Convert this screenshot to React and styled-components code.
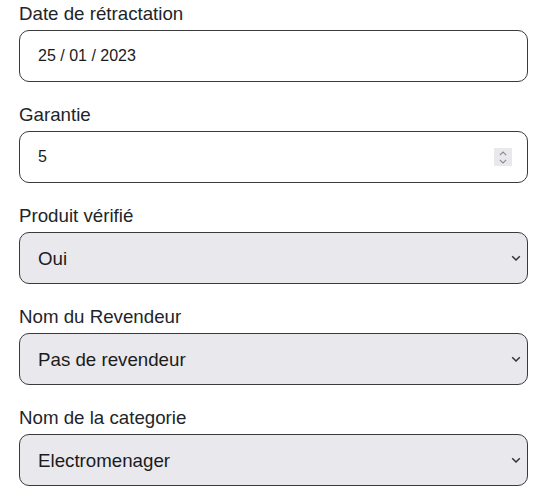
import React from "react";
import styled, { createGlobalStyle } from "styled-components";

const Global = createGlobalStyle`
  html, body { margin: 0; padding: 0; background: #ffffff; }
  body { font-family: "Liberation Sans", Arial, sans-serif; color: #212529; }
  * { box-sizing: border-box; }
`;

const Form = styled.form`
  display: flex;
  flex-direction: column;
  gap: 19px;
  width: 509px;
  margin-left: 19px;
`;

const Field = styled.div`
  display: flex;
  flex-direction: column;
`;

const Label = styled.label`
  font-size: 18.72px;
  line-height: 28px;
  margin-bottom: 2px;
  color: #212529;
`;

const Box = styled.div`
  position: relative;
  display: flex;
  align-items: center;
  height: 52px;
  border: 1px solid #3a3a3a;
  border-radius: 10px;
  background: ${(p) => (p.$grey ? "#e9e8ed" : "#ffffff")};
  overflow: hidden;
`;

const TextInput = styled.input`
  flex: 1;
  min-width: 0;
  height: 100%;
  border: none;
  outline: none;
  background: transparent;
  padding: 0 0 0 18px;
  font-family: inherit;
  font-size: 16px;
  color: #1b1b1b;
`;

const Spinner = styled.span`
  display: flex;
  flex-direction: column;
  align-items: center;
  justify-content: center;
  gap: 3px;
  width: 18px;
  height: 18px;
  margin-right: 15px;
  background: #e9e9ed;
`;

const Select = styled.select`
  appearance: none;
  -webkit-appearance: none;
  width: 100%;
  height: 100%;
  border: none;
  outline: none;
  background: transparent;
  padding: 0 40px 0 18px;
  font-family: inherit;
  font-size: 18.72px;
  color: #1b1b1b;
`;

const Chevron = styled.svg`
  position: absolute;
  right: 6px;
  top: 50%;
  margin-top: -4px;
  pointer-events: none;
`;

function SelectField({ label, value, options }) {
  return (
    <Field>
      <Label>{label}</Label>
      <Box $grey>
        <Select defaultValue={value}>
          {options.map((o) => (
            <option key={o}>{o}</option>
          ))}
        </Select>
        <Chevron width="10" height="8" viewBox="0 0 10 8">
          <path d="M1.2 2.2 L5 6 L8.8 2.2" fill="none" stroke="#333" strokeWidth="1.5" />
        </Chevron>
      </Box>
    </Field>
  );
}

export default function App() {
  return (
    <>
      <Global />
      <Form onSubmit={(e) => e.preventDefault()}>
        <Field>
          <Label>Date de rétractation</Label>
          <Box>
            <TextInput type="text" defaultValue="25 / 01 / 2023" />
          </Box>
        </Field>
        <Field>
          <Label>Garantie</Label>
          <Box>
            <TextInput type="text" defaultValue="5" />
            <Spinner>
              <svg width="8" height="5" viewBox="0 0 8 5">
                <path d="M0.8 4.2 L4 1 L7.2 4.2" fill="none" stroke="#8a8a8f" strokeWidth="1.1" />
              </svg>
              <svg width="8" height="5" viewBox="0 0 8 5">
                <path d="M0.8 0.8 L4 4 L7.2 0.8" fill="none" stroke="#8a8a8f" strokeWidth="1.1" />
              </svg>
            </Spinner>
          </Box>
        </Field>
        <SelectField label="Produit vérifié" value="Oui" options={["Oui", "Non"]} />
        <SelectField
          label="Nom du Revendeur"
          value="Pas de revendeur"
          options={["Pas de revendeur"]}
        />
        <SelectField
          label="Nom de la categorie"
          value="Electromenager"
          options={["Electromenager"]}
        />
      </Form>
    </>
  );
}
